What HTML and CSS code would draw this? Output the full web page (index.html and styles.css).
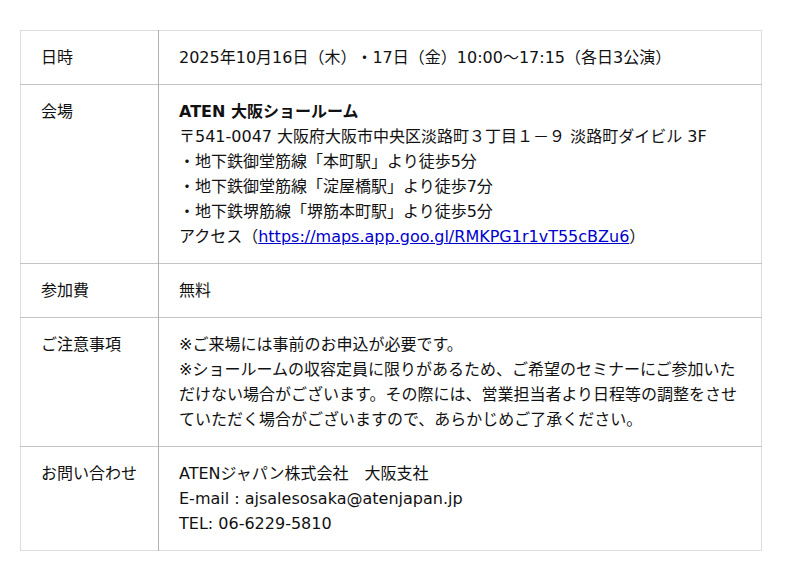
FILE: index.html
```html
<!DOCTYPE html>
<html lang="ja">
<head>
<meta charset="utf-8">
<link rel="stylesheet" href="styles.css">
</head>
<body>
<table class="info">
  <tr>
    <th>日時</th>
    <td>2025年10月16日（木）・17日（金）10:00〜17:15（各日3公演）</td>
  </tr>
  <tr>
    <th>会場</th>
    <td><strong>ATEN 大阪ショールーム</strong><br>〒541-0047 大阪府大阪市中央区淡路町３丁目１－９ 淡路町ダイビル 3F<br>・地下鉄御堂筋線「本町駅」より徒歩5分<br>・地下鉄御堂筋線「淀屋橋駅」より徒歩7分<br>・地下鉄堺筋線「堺筋本町駅」より徒歩5分<br>アクセス（<a href="#">https://maps.app.goo.gl/RMKPG1r1vT55cBZu6</a>）</td>
  </tr>
  <tr>
    <th>参加費</th>
    <td>無料</td>
  </tr>
  <tr>
    <th>ご注意事項</th>
    <td>※ご来場には事前のお申込が必要です。<br>※ショールームの収容定員に限りがあるため、ご希望のセミナーにご参加いただけない場合がございます。その際には、営業担当者より日程等の調整をさせていただく場合がございますので、あらかじめご了承ください。</td>
  </tr>
  <tr>
    <th>お問い合わせ</th>
    <td>ATENジャパン株式会社　大阪支社<br>E-mail : ajsalesosaka@atenjapan.jp<br>TEL: 06-6229-5810</td>
  </tr>
</table>
</body>
</html>
```
FILE: styles.css
```css
html, body {
  margin: 0;
  padding: 0;
  background: #fff;
}
body {
  padding: 30px 20px;
  font-family: "DejaVu Sans", "Noto Sans CJK JP", sans-serif;
  font-size: 16px;
  line-height: 25px;
  color: #111;
  text-spacing-trim: space-all;
}
.info {
  width: 742px;
  border-collapse: collapse;
  border: 1px solid #ddd;
  table-layout: fixed;
}
.info th, .info td {
  text-align: left;
  vertical-align: top;
  font-weight: normal;
  padding: 14px 20px;
  border-top: 1px solid #c4c4c4;
}
.info tr:first-child th, .info tr:first-child td {
  border-top: 1px solid #ddd;
}
.info th {
  width: 97px;
  border-right: 1px solid #b0b0b0;
}
.info strong {
  font-weight: bold;
}
.info a {
  color: #0000cc;
  text-decoration: underline;
}
```
